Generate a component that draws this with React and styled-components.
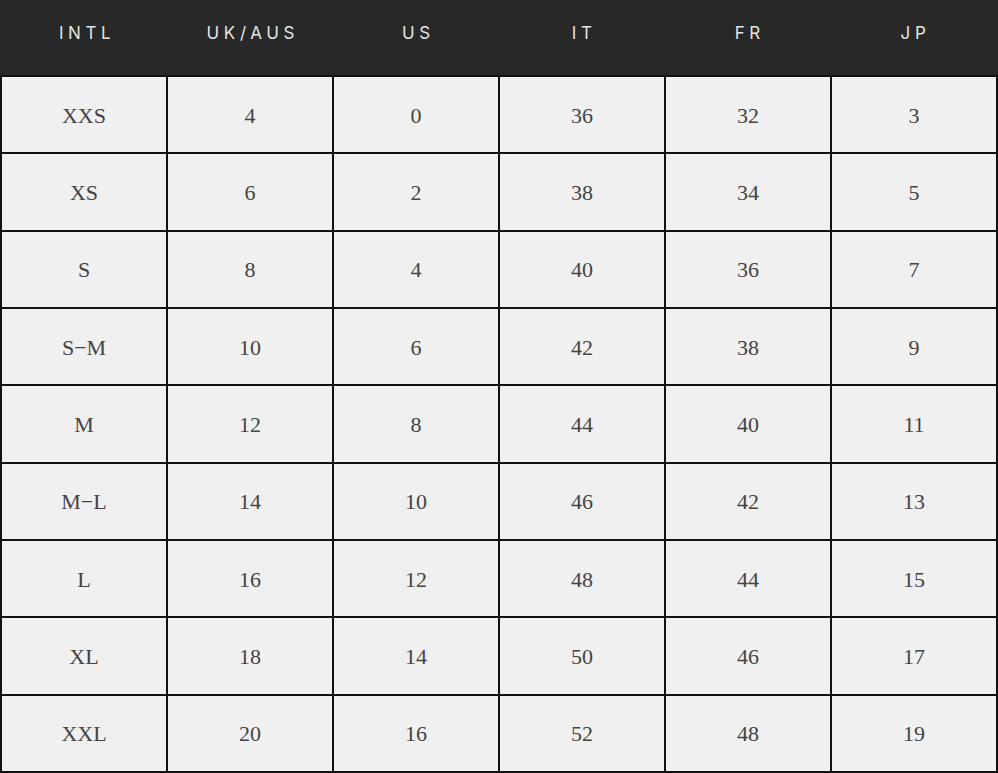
import styled, { createGlobalStyle } from "styled-components";

const GlobalStyle = createGlobalStyle`
    html, body {
        margin: 0;
        padding: 0;
        background: #f0f0f0;
    }
`;

const Chart = styled.div`
    width: 998px;
    display: grid;
    grid-template-rows: 75px repeat(9, 1fr);
    height: 773px;
    background: #111;
    row-gap: 2px;
    padding: 0 0 2px;
    box-sizing: border-box;
`;

const HeadRow = styled.div`
    display: grid;
    grid-template-columns: repeat(6, 1fr);
    background: #282828;
    height: 75px;
    margin-bottom: -2px;
    padding: 0 2px;
`;

const HeadCell = styled.div`
    display: flex;
    align-items: center;
    justify-content: center;
    padding-bottom: 9px;
    font-family: Inter, "Liberation Sans", sans-serif;
    font-size: 17px;
    letter-spacing: 4.6px;
    color: #e4e4e4;
    text-indent: 4.6px;
`;

const Row = styled.div`
    display: grid;
    grid-template-columns: repeat(6, 1fr);
    column-gap: 2px;
    padding: 0 2px;
`;

const Cell = styled.div`
    display: flex;
    align-items: center;
    justify-content: center;
    background: #f0f0f0;
    font-family: "Liberation Serif", "DejaVu Serif", serif;
    font-size: 22px;
    color: #444;
    padding-top: 2px;
`;

const headers = ["INTL", "UK/AUS", "US", "IT", "FR", "JP"];

const sizes = [
    ["XXS", 4, 0, 36, 32, 3],
    ["XS", 6, 2, 38, 34, 5],
    ["S", 8, 4, 40, 36, 7],
    ["S\u2212M", 10, 6, 42, 38, 9],
    ["M", 12, 8, 44, 40, 11],
    ["M\u2212L", 14, 10, 46, 42, 13],
    ["L", 16, 12, 48, 44, 15],
    ["XL", 18, 14, 50, 46, 17],
    ["XXL", 20, 16, 52, 48, 19],
];

export default function App() {
    return (
        <>
            <GlobalStyle />
            <Chart>
                <HeadRow>
                    {headers.map((h) => (
                        <HeadCell key={h}>{h}</HeadCell>
                    ))}
                </HeadRow>
                {sizes.map((row) => (
                    <Row key={row[0]}>
                        {row.map((v, i) => (
                            <Cell key={i}>{v}</Cell>
                        ))}
                    </Row>
                ))}
            </Chart>
        </>
    );
}
